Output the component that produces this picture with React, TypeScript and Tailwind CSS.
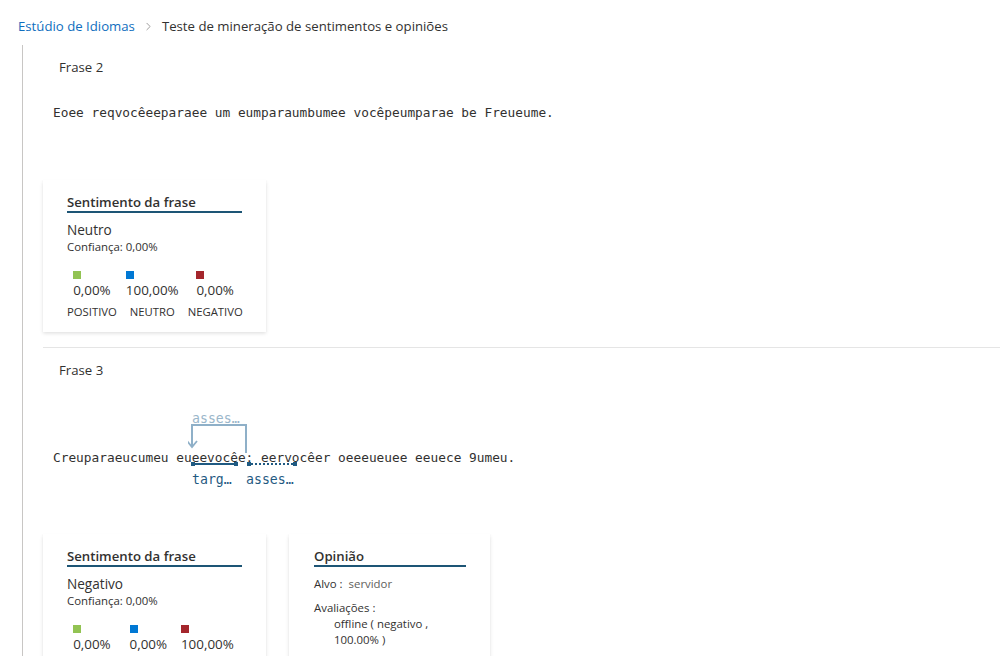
import { ChevronRight } from "lucide-react";

const SANS = "font-['Segoe_UI','Open_Sans',sans-serif]";
const MONO = "font-['DejaVu_Sans_Mono','Liberation_Mono',monospace]";

const CARD =
  "bg-white shadow-[0_1.6px_3.6px_rgba(0,0,0,0.13),0_0.3px_0.9px_rgba(0,0,0,0.11)]";

interface Score {
  color: string;
  value: string;
  label: string;
}

function SentimentCard({ label, scores }: { label: string; scores: Score[] }) {
  return (
    <div className={`${CARD} w-[223px] pl-[24px] pr-[24px] pt-[13px] pb-[12px]`}>
      <div className="text-[13.2px] leading-[18px] font-semibold text-[#323130] border-b-2 border-[#1d5575]">
        Sentimento da frase
      </div>
      <div className="mt-[8px] text-[13.6px] leading-[18px] text-[#323130]">{label}</div>
      <div className="text-[11.4px] leading-[16px] text-[#323130]">Confiança: 0,00%</div>
      <div className="mt-[16px] grid grid-cols-[auto_auto_auto] justify-start gap-x-[9px]">
        {scores.map((s) => (
          <div key={s.label} className="flex flex-col items-center">
            <div className="flex flex-col items-start">
              <span className={`w-[8px] h-[8px] ${s.color}`} />
              <span className="mt-[2px] text-[13.4px] leading-[18px] text-[#323130]">{s.value}</span>
            </div>
            <span className="mt-[5px] text-[11.3px] leading-[16px] text-[#323130]">{s.label}</span>
          </div>
        ))}
      </div>
    </div>
  );
}

export default function App() {
  return (
    <div className={`${SANS} w-[1000px] h-[656px] overflow-hidden bg-white text-[#323130]`}>
      {/* Breadcrumb */}
      <div className="pt-[16px] pl-[18px] flex items-center text-[13.2px] leading-[20px]">
        <span className="text-[#106ebe]">Estúdio de Idiomas</span>
        <ChevronRight size={13} strokeWidth={1.5} className="text-[#8a8886] mx-[7px]" />
        <span className="text-[#323130]">Teste de mineração de sentimentos e opiniões</span>
      </div>

      <div className="mt-[9px] ml-[22px] border-l border-[#c8c6c4] h-[700px] pl-[20px]">
        {/* Frase 2 */}
        <div className="pt-[12px] pl-[16px] text-[13.2px] leading-[20px]">Frase 2</div>
        <div className={`${MONO} mt-[26px] pl-[10px] text-[12.8px] leading-[20px] text-[#323130]`}>
          Eoee reqvocêeeparaee um eumparaumbumee vocêpeumparae be Freueume.
        </div>
        <div className="mt-[57px]">
          <SentimentCard
            label="Neutro"
            scores={[
              { color: "bg-[#92c353]", value: "0,00%", label: "POSITIVO" },
              { color: "bg-[#0078d4]", value: "100,00%", label: "NEUTRO" },
              { color: "bg-[#a4262c]", value: "0,00%", label: "NEGATIVO" },
            ]}
          />
        </div>

        <div className="mt-[15px] border-t border-[#e5e5e5]" />

        {/* Frase 3 */}
        <div className="pt-[12px] pl-[16px] text-[13.2px] leading-[20px]">Frase 3</div>
        <div className="relative h-[110px]">
          <span className={`${MONO} absolute left-[149px] top-[31px] text-[13.2px] leading-[16px] text-[#9ab6ca]`}>
            asses…
          </span>
          <svg className="absolute left-[145px] top-[43px]" width="62" height="32" viewBox="0 0 62 32">
            <path d="M4 24 V2 H58 V30" fill="none" stroke="#8fb0c8" strokeWidth="2" />
            <path d="M-1 18 L4 24 L9 18" fill="none" stroke="#8fb0c8" strokeWidth="1.8" />
          </svg>
          <div className={`${MONO} pt-[68px] pl-[10px] text-[12.8px] leading-[20px] text-[#323130]`}>
            Creuparaeucumeu eueevocêe: eervocêer oeeeueuee eeuece 9umeu.
          </div>
          <svg className="absolute left-[148px] top-[81px]" width="108" height="6" viewBox="0 0 108 6">
            <rect x="0" y="1" width="4" height="4" fill="#1f5a82" />
            <rect x="43" y="1" width="4" height="4" fill="#1f5a82" />
            <line x1="2" y1="3" x2="45" y2="3" stroke="#1f5a82" strokeWidth="2" />
            <rect x="56" y="1" width="4" height="4" fill="#1f5a82" />
            <rect x="102" y="1" width="4" height="4" fill="#1f5a82" />
            <line x1="60" y1="3" x2="102" y2="3" stroke="#1f5a82" strokeWidth="2" strokeDasharray="2 2" />
          </svg>
          <span className={`${MONO} absolute left-[149px] top-[91px] text-[13.2px] leading-[18px] text-[#1f5a82]`}>
            targ…
          </span>
          <span className={`${MONO} absolute left-[203px] top-[91px] text-[13.2px] leading-[18px] text-[#1f5a82]`}>
            asses…
          </span>
        </div>

        <div className="mt-[44px] flex items-start gap-[23px]">
          <SentimentCard
            label="Negativo"
            scores={[
              { color: "bg-[#92c353]", value: "0,00%", label: "POSITIVO" },
              { color: "bg-[#0078d4]", value: "0,00%", label: "NEUTRO" },
              { color: "bg-[#a4262c]", value: "100,00%", label: "NEGATIVO" },
            ]}
          />
          <div className={`${CARD} w-[201px] pl-[25px] pr-[24px] pt-[13px] pb-[16px]`}>
            <div className="text-[13.2px] leading-[18px] font-semibold text-[#323130] border-b-2 border-[#1d5575]">
              Opinião
            </div>
            <div className="mt-[9px] text-[11.4px] leading-[16px]">
              <span className="font-medium text-[#323130]">Alvo :</span>
              <span className="ml-[6px] text-[#605e5c]">servidor</span>
            </div>
            <div className="mt-[8px] text-[11.4px] leading-[16px] font-medium">Avaliações :</div>
            <div className="pl-[20px] text-[11.4px] leading-[16px] text-[#323130]">
              offline ( negativo ,
              <br />
              100.00% )
            </div>
          </div>
        </div>
      </div>
    </div>
  );
}
